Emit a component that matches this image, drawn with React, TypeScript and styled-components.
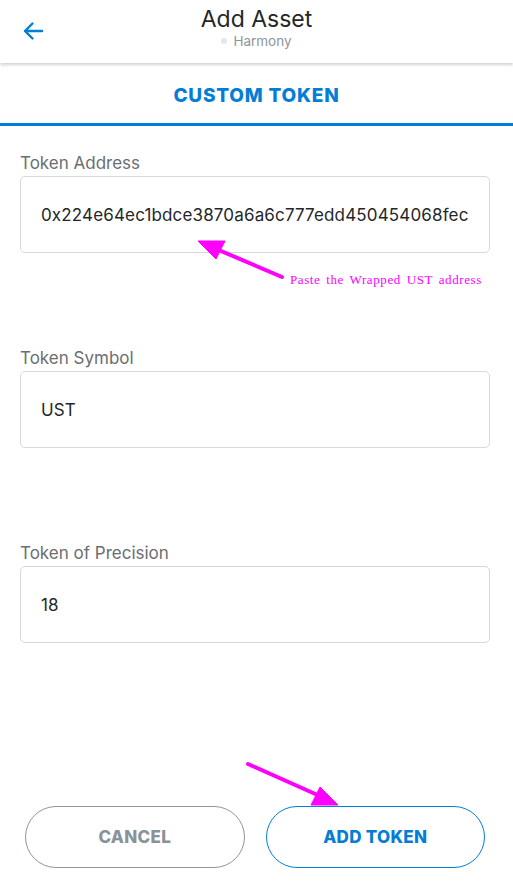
import styled, { createGlobalStyle } from 'styled-components';

const GlobalStyle = createGlobalStyle`
  html, body {
    margin: 0;
    padding: 0;
    background: #ffffff;
  }
  * {
    box-sizing: border-box;
  }
`;

const BLUE = '#037dd6';
const FONT = 'Inter, "Noto Sans", sans-serif';

const Page = styled.div`
  position: relative;
  width: 513px;
  height: 885px;
  display: flex;
  flex-direction: column;
  font-family: ${FONT};
  background: #ffffff;
  overflow: hidden;
`;

const Header = styled.header`
  position: relative;
  height: 63px;
  display: flex;
  flex-direction: column;
  align-items: center;
  padding-top: 6px;
  box-shadow: 0 2px 3px rgba(0, 0, 0, 0.18);
  z-index: 1;
`;

const BackButton = styled.button`
  position: absolute;
  left: 20px;
  top: 18px;
  width: 26px;
  height: 26px;
  padding: 0;
  border: none;
  background: none;
  display: flex;
  align-items: center;
  justify-content: center;
`;

const Title = styled.h1`
  margin: 0;
  font-size: 23px;
  font-weight: 400;
  line-height: 26px;
  color: #24272a;
`;

const Network = styled.div`
  display: flex;
  align-items: center;
  gap: 6px;
  font-size: 13.5px;
  line-height: 18px;
  color: #8f959b;
`;

const Dot = styled.span`
  width: 6px;
  height: 6px;
  border-radius: 50%;
  background: #e4e6e8;
`;

const Tab = styled.div`
  height: 63px;
  display: flex;
  align-items: center;
  justify-content: center;
  padding-top: 4px;
  border-bottom: 3px solid ${BLUE};
  font-size: 19px;
  font-weight: 800;
  letter-spacing: 0.8px;
  color: ${BLUE};
`;

const Form = styled.div`
  flex: 1;
  display: flex;
  flex-direction: column;
  gap: 95px;
  padding: 27px 23px 0 20px;
`;

const Field = styled.div`
  display: flex;
  flex-direction: column;
  gap: 3px;
`;

const Label = styled.label`
  font-size: 17px;
  line-height: 20px;
  color: #6a6e72;
`;

const InputBox = styled.div`
  height: 77px;
  display: flex;
  align-items: center;
  padding-left: 20px;
  border: 1px solid #d6d9dc;
  border-radius: 5px;
  font-size: 17px;
  letter-spacing: 0.15px;
  color: #24272a;
`;

const Footer = styled.div`
  display: flex;
  gap: 21px;
  padding: 0 28px 17px 25px;
`;

const PillButton = styled.button<{ $primary?: boolean }>`
  flex: 1;
  height: 62px;
  border-radius: 31px;
  background: #ffffff;
  border: 1px solid ${p => (p.$primary ? BLUE : '#8f969c')};
  color: ${p => (p.$primary ? BLUE : '#8a9299')};
  font-family: ${FONT};
  font-size: 17px;
  font-weight: 800;
  letter-spacing: 0.3px;
`;

const Note = styled.span`
  position: absolute;
  left: 290px;
  top: 272px;
  font-family: "Liberation Serif", serif;
  font-size: 13px;
  letter-spacing: 0.6px;
  word-spacing: 2px;
  color: #ff00ff;
`;

const Overlay = styled.svg`
  position: absolute;
  left: 0;
  top: 0;
  pointer-events: none;
`;

const fields = [
  { label: 'Token Address', value: '0x224e64ec1bdce3870a6a6c777edd450454068fec' },
  { label: 'Token Symbol', value: 'UST' },
  { label: 'Token of Precision', value: '18' },
];

export default function App() {
  return (
    <>
      <GlobalStyle />
      <Page>
        <Header>
          <BackButton aria-label="back">
            <svg width="22" height="20" viewBox="0 0 22 20" fill="none">
              <path d="M20 10H3M10.5 2.5L3 10l7.5 7.5" stroke={BLUE} strokeWidth="2.4" strokeLinecap="round" strokeLinejoin="round" />
            </svg>
          </BackButton>
          <Title>Add Asset</Title>
          <Network>
            <Dot />
            Harmony
          </Network>
        </Header>
        <Tab>CUSTOM TOKEN</Tab>
        <Form>
          {fields.map(f => (
            <Field key={f.label}>
              <Label>{f.label}</Label>
              <InputBox>{f.value}</InputBox>
            </Field>
          ))}
        </Form>
        <Footer>
          <PillButton>CANCEL</PillButton>
          <PillButton $primary>ADD TOKEN</PillButton>
        </Footer>

        <Note>Paste the Wrapped UST address</Note>
        <Overlay width="513" height="885" viewBox="0 0 513 885">
          <g fill="#ff00ff" stroke="#ff00ff">
            <line x1="282" y1="277" x2="214" y2="248" strokeWidth="4" strokeLinecap="round" />
            <polygon points="198,241 225,241 216,259" strokeWidth="1" />
            <line x1="248" y1="764" x2="322" y2="797" strokeWidth="4" strokeLinecap="round" />
            <polygon points="338,805 311,805 320,787" strokeWidth="1" />
          </g>
        </Overlay>
      </Page>
    </>
  );
}
